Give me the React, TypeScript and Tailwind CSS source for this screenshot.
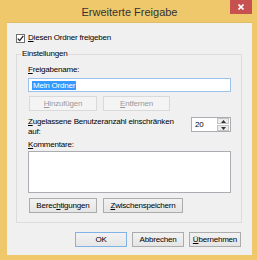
import React from 'react';

// Windows 8 style "Erweiterte Freigabe" dialog
const Btn = ({ children, disabled, primary, w }: { children: React.ReactNode; disabled?: boolean; primary?: boolean; w: string }) => (
    <div
        className={`${w} h-[15px] flex items-center justify-center border leading-none ${disabled
            ? 'border-[#d9d9d9] bg-[#f4f4f4] text-[#9a9a9a]'
            : primary
                ? 'border-[#7fb2e6] bg-gradient-to-b from-[#f2f2f2] to-[#e6e6e6] text-black'
                : 'border-[#acacac] bg-gradient-to-b from-[#f2f2f2] to-[#e5e5e5] text-black'
            }`}
    >
        {children}
    </div>
);

const App = () => {
    return (
        <div className="w-[257px] h-[260px] bg-[#f0c86c] flex flex-col pl-[7px] pr-[5px] pb-[5px] font-['Liberation_Sans',Arial,sans-serif] text-[8px] tracking-[-0.2px] text-black">
            {/* title bar */}
            <div className="h-[22px] flex items-start shrink-0">
                <div className="w-[22px]" />
                <div className="flex-1 text-center text-[11px] tracking-normal leading-[24px] text-[#333333]">Erweiterte Freigabe</div>
                <div className="w-[22px] h-[14px] bg-[#c75050] flex items-center justify-center">
                    <svg width="6" height="6" viewBox="0 0 6 6">
                        <path d="M0.5 0.5 L5.5 5.5 M5.5 0.5 L0.5 5.5" stroke="#ffffff" strokeWidth="1.6" />
                    </svg>
                </div>
            </div>

            {/* client area */}
            <div className="flex-1 bg-[#f0f0f0] flex flex-col border-t border-[#e0bc66]">
                <div className="flex items-center h-[10px] mt-[10px] ml-[9px]">
                    <div className="w-[9px] h-[9px] border border-[#707070] bg-white flex items-center justify-center">
                        <svg width="7" height="7" viewBox="0 0 7 7">
                            <path d="M0.8 3.6 L2.7 5.6 L6.3 0.9" stroke="#222" strokeWidth="1.3" fill="none" />
                        </svg>
                    </div>
                    <span className="ml-[3px] leading-[10px]"><u>D</u>iesen Ordner freigeben</span>
                </div>

                <fieldset className="ml-[9px] w-[226px] mt-[6px] border border-[#dcdcdc] pl-[11px] pr-[10px] pb-[9px] flex flex-col">
                    <legend className="-ml-[7px] px-[1px] leading-[10px]">Einstellungen</legend>
                    <div className="leading-[10px] mt-[6px]"><u>F</u>reigabename:</div>
                    <div className="mt-[3px] h-[14px] border border-[#9cc2ec] bg-white flex items-center pl-[3px]">
                        <span className="bg-[#3399ff] text-white leading-[9px] px-[1px]">Mein Ordner</span>
                    </div>
                    <div className="flex gap-[6px] mt-[4px] ml-[1px]">
                        <Btn disabled w="w-[68px]"><u>H</u>inzufügen</Btn>
                        <Btn disabled w="w-[67px]"><u>E</u>ntfernen</Btn>
                    </div>
                    <div className="flex justify-between mt-[6px]">
                        <div className="leading-[10px] w-[160px]"><u>Z</u>ugelassene Benutzeranzahl einschränken auf:</div>
                        <div className="w-[40px] h-[15px] border border-[#abadb3] bg-white flex items-center">
                            <span className="flex-1 pl-[3px] leading-none">20</span>
                            <div className="w-[12px] h-[13px] mr-[1px] flex flex-col gap-[1px]">
                                <div className="flex-1 bg-[#ececec] border border-[#c4c4c4] flex items-center justify-center">
                                    <svg width="5" height="3" viewBox="0 0 5 3"><path d="M0 3 L2.5 0 L5 3 Z" fill="#333" /></svg>
                                </div>
                                <div className="flex-1 bg-[#ececec] border border-[#c4c4c4] flex items-center justify-center">
                                    <svg width="5" height="3" viewBox="0 0 5 3"><path d="M0 0 L2.5 3 L5 0 Z" fill="#333" /></svg>
                                </div>
                            </div>
                        </div>
                    </div>
                    <div className="leading-[10px] mt-[3px]"><u>K</u>ommentare:</div>
                    <div className="mt-[1px] h-[42px] border border-[#abadb3] bg-white" />
                    <div className="flex gap-[6px] mt-[5px] ml-[1px]">
                        <Btn w="w-[68px]">Berec<u>h</u>tigungen</Btn>
                        <Btn w="w-[80px]"><u>Z</u>wischenspeichern</Btn>
                    </div>
                </fieldset>

                <div className="flex justify-end gap-[5px] mt-[9px] pr-[11px]">
                    <Btn primary w="w-[52px]">OK</Btn>
                    <Btn w="w-[52px]">Abbrechen</Btn>
                    <Btn w="w-[52px]"><u>Ü</u>bernehmen</Btn>
                </div>
            </div>
        </div>
    );
};

export default App;
